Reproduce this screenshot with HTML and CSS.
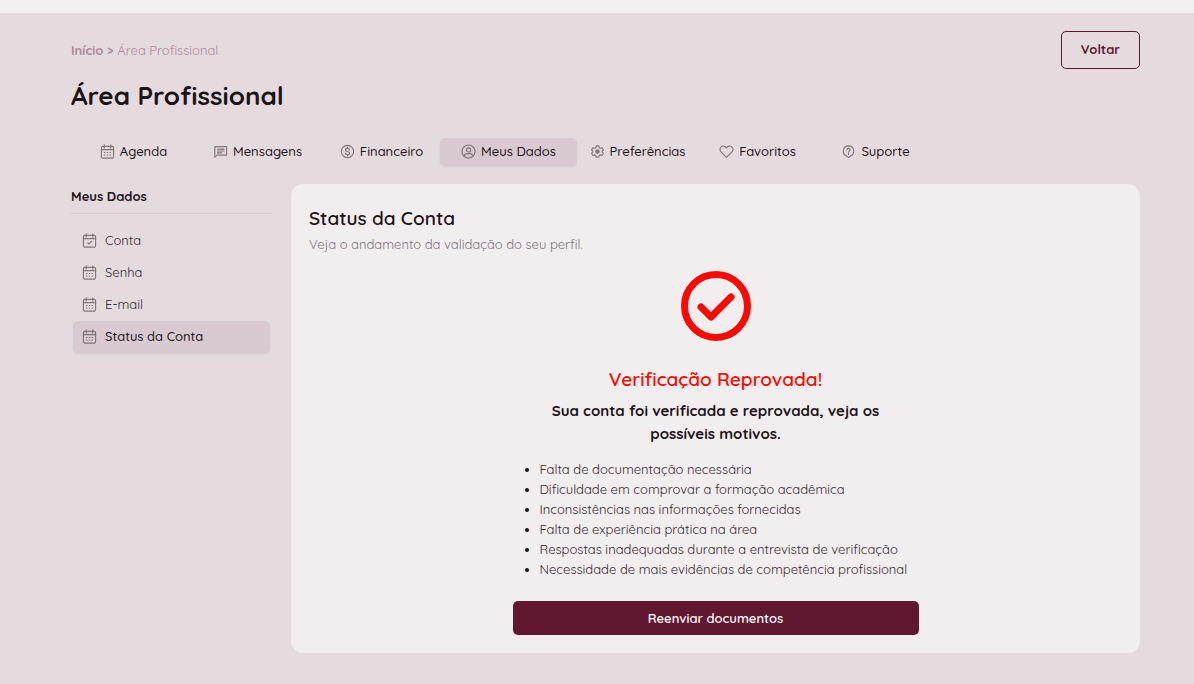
FILE: index.html
```
<!DOCTYPE html>
<html lang="pt-BR">
<head>
  <meta charset="UTF-8">
  <meta name="viewport" content="width=device-width, initial-scale=1.0">
  <title>Área Profissional</title>
  <link rel="stylesheet" href="styles.css">
</head>
<body>
  <!-- Shared icons -->
  <svg class="sprite" aria-hidden="true">
    <symbol id="calendar" viewBox="0 0 16 16">
      <rect x="1.5" y="2.5" width="13" height="12.5" rx="1.5"/>
      <path d="M1.5 6h13M4.5 .8v3.4M11.5 .8v3.4"/>
      <path d="M4.7 9h.6M7.7 9h.6M10.7 9h.6M4.7 11.7h.6M7.7 11.7h.6M10.7 11.7h.6"/>
    </symbol>
    <symbol id="calendar-check" viewBox="0 0 16 16">
      <rect x="1.5" y="2.5" width="13" height="12.5" rx="1.5"/>
      <path d="M1.5 6h13M4.5 .8v3.4M11.5 .8v3.4M6.2 10.4l1.4 1.3 2.7-2.9"/>
    </symbol>
  </svg>

  <header class="topbar"></header>

  <main class="page">
    <!-- Page heading -->
    <div class="page-header">
      <div>
        <nav class="breadcrumb"><a href="#">Início &gt;</a> <span>Área Profissional</span></nav>
        <h1>Área Profissional</h1>
      </div>
      <button type="button" class="btn-back">Voltar</button>
    </div>

    <!-- Tabs -->
    <nav class="tabs">
      <a href="#"><svg class="icon"><use href="#calendar"/></svg>Agenda</a>
      <a href="#">
        <svg class="icon" viewBox="0 0 16 16"><path d="M2 14V2.8h12.5v9H4.2zM4.7 5.4h7.2M4.7 7.4h7.2M4.7 9.4h4.8"/></svg>Mensagens
      </a>
      <a href="#">
        <svg class="icon" viewBox="0 0 16 16"><circle cx="8" cy="8" r="6.5"/><path d="M10.2 6.2C10 5.2 9.2 4.7 8 4.7c-1.3 0-2.2.6-2.2 1.6C5.8 8.5 10.4 7.4 10.4 9.7c0 1-1 1.6-2.4 1.6-1.3 0-2.2-.6-2.4-1.6M8 3.5v1.200M8 11.300v1.200"/></svg>Financeiro
      </a>
      <a href="#" class="active">
        <svg class="icon" viewBox="0 0 16 16"><circle cx="8" cy="8" r="7"/><circle cx="8" cy="6.3" r="2.2"/><path d="M3.7 13.3c0-2.3 1-3 2.6-3h3.4c1.6 0 2.6.7 2.6 3"/></svg>Meus Dados
      </a>
      <a href="#">
        <svg class="icon" viewBox="0 0 16 16"><path d="M6.6 2h2.8l.4 1.9 1.2.7 1.9-.7 1.4 2.5L12.9 7.6v1l1.4 1.2-1.4 2.4-1.9-.6-1.2.7L9.4 14H6.6l-.4-1.7-1.2-.7-1.9.6-1.4-2.4 1.4-1.2v-1L1.7 6.4l1.4-2.5 1.9.7 1.2-.7z"/><circle class="dot" cx="8" cy="8.1" r="1.8"/></svg>Preferências
      </a>
      <a href="#">
        <svg class="icon" viewBox="0 0 16 16"><path d="M8 14.3 2.2 8.5C.6 6.8.8 4.3 2.3 3 4 1.6 6.5 2 8 4.3 9.5 2 12 1.6 13.7 3c1.5 1.3 1.7 3.8.1 5.5z"/></svg>Favoritos
      </a>
      <a href="#">
        <svg class="icon" viewBox="0 0 16 16"><path d="M8 2a5.6 5.6 0 0 1 1.8 10.9L8 14.6l-1.8-1.7A5.6 5.6 0 0 1 8 2z"/><path d="M6.3 6.2C6.4 5.2 7 4.7 8 4.7s1.7.6 1.7 1.5C9.7 7.4 8 7.4 8 8.9M8 10.2v.9"/></svg>Suporte
      </a>
    </nav>

    <div class="layout">
      <!-- Side menu -->
      <aside class="sidebar">
        <h2>Meus Dados</h2>
        <ul>
          <li><a href="#"><svg class="icon"><use href="#calendar-check"/></svg>Conta</a></li>
          <li><a href="#"><svg class="icon"><use href="#calendar"/></svg>Senha</a></li>
          <li><a href="#"><svg class="icon"><use href="#calendar"/></svg>E-mail</a></li>
          <li><a href="#" class="active"><svg class="icon"><use href="#calendar"/></svg>Status da Conta</a></li>
        </ul>
      </aside>

      <!-- Account status -->
      <section class="card">
        <h2>Status da Conta</h2>
        <p class="subtitle">Veja o andamento da validação do seu perfil.</p>
        <div class="status">
          <svg class="status-icon" viewBox="0 0 70 70"><circle cx="35" cy="35" r="31.5"/><path d="M20 36l10 10L50 26"/></svg>
          <h3>Verificação Reprovada!</h3>
          <p class="message">Sua conta foi verificada e reprovada, veja os possíveis motivos.</p>
          <ul class="reasons">
            <li>Falta de documentação necessária</li>
            <li>Dificuldade em comprovar a formação acadêmica</li>
            <li>Inconsistências nas informações fornecidas</li>
            <li>Falta de experiência prática na área</li>
            <li>Respostas inadequadas durante a entrevista de verificação</li>
            <li>Necessidade de mais evidências de competência profissional</li>
          </ul>
          <button type="button" class="btn-send">Reenviar documentos</button>
        </div>
      </section>
    </div>
  </main>
</body>
</html>
```
FILE: styles.css
```
* {
  margin: 0;
  padding: 0;
  box-sizing: border-box;
}
body {
  font-family: Quicksand, Lato, sans-serif;
  font-size: 13px;
  line-height: 20px;
  background: #e4dbdf;
  color: #1d1418;
}
a {
  color: inherit;
  text-decoration: none;
}
ul {
  list-style: none;
}
button {
  font-family: inherit;
  font-size: 13px;
  line-height: 20px;
  border-radius: 5px;
  cursor: pointer;
}
.sprite {
  position: absolute;
  width: 0;
  height: 0;
}
.icon {
  width: 15px;
  height: 15px;
  flex: none;
  fill: none;
  stroke: #827479;
  stroke-width: 1.2;
  stroke-linecap: round;
  stroke-linejoin: round;
}
.icon .dot {
  fill: #827479;
}
.topbar {
  height: 13px;
  background: #f4f0f2;
}
.page {
  padding: 18px 54px 30px 71px;
}
/* Page heading */
.page-header {
  display: flex;
  justify-content: space-between;
  align-items: flex-start;
}
.breadcrumb {
  padding-top: 9px;
  color: #ad8997;
}
.breadcrumb a {
  font-weight: 700;
}
.page-header h1 {
  margin-top: 18px;
  font-size: 26px;
  line-height: 36px;
  font-weight: 700;
}
.btn-back {
  height: 38px;
  padding: 0 19px 2px;
  border: 1px solid #621730;
  background: transparent;
  color: #621730;
  font-weight: 700;
}
/* Tabs */
.tabs {
  display: grid;
  grid-template-columns: 117px 131px 117px 137px 121px 119px 117px;
  margin-top: 24px;
  padding-left: 4px;
}
.tabs a {
  display: flex;
  align-items: center;
  justify-content: center;
  gap: 5px;
  height: 28px;
  padding-bottom: 2px;
  border-radius: 5px;
  font-weight: 500;
  white-space: nowrap;
}
.tabs .active,
.sidebar .active {
  background: #d9c9d0;
  color: #1d1418;
  box-shadow: 0 1px 2px rgba(98, 23, 48, 0.08);
}
/* Side menu and card */
.layout {
  display: grid;
  grid-template-columns: 201px 1fr;
  gap: 19px;
  margin-top: 18px;
}
.sidebar h2 {
  padding: 2px 0 7px;
  border-bottom: 1px solid #d5c6cd;
  font-size: 13px;
  font-weight: 700;
}
.sidebar ul {
  padding: 11px 2px;
}
.sidebar a {
  display: flex;
  align-items: center;
  gap: 8px;
  height: 32px;
  padding: 0 9px 2px;
  border-radius: 5px;
  color: #35292e;
}
.sidebar .active {
  font-weight: 500;
}
.card {
  padding: 22px 18px 18px;
  border-radius: 12px;
  background: #f2edef;
}
.card h2 {
  font-size: 19px;
  line-height: 24px;
  font-weight: 600;
}
.subtitle {
  margin-top: 4px;
  color: #7c7377;
}
.status {
  display: flex;
  flex-direction: column;
  align-items: center;
  width: 406px;
  max-width: 100%;
  margin: 17px auto 0;
}
.status-icon {
  width: 70px;
  height: 70px;
  fill: none;
  stroke: #f90a00;
  stroke-width: 7;
  stroke-linecap: round;
  stroke-linejoin: round;
}
.status h3 {
  margin-top: 26px;
  font-size: 19px;
  line-height: 24px;
  font-weight: 600;
  color: #f90a00;
}
.message {
  max-width: 350px;
  margin-top: 8px;
  font-size: 15px;
  line-height: 23px;
  font-weight: 700;
  text-align: center;
}
.reasons {
  align-self: stretch;
  margin-top: 14px;
  padding-left: 27px;
  list-style: disc;
  color: #35292e;
  white-space: nowrap;
}
.reasons li::marker {
  color: #1d1418;
}
.btn-send {
  width: 100%;
  height: 34px;
  margin-top: 22px;
  border: none;
  background: #621730;
  color: #fff;
  font-weight: 600;
}
```
